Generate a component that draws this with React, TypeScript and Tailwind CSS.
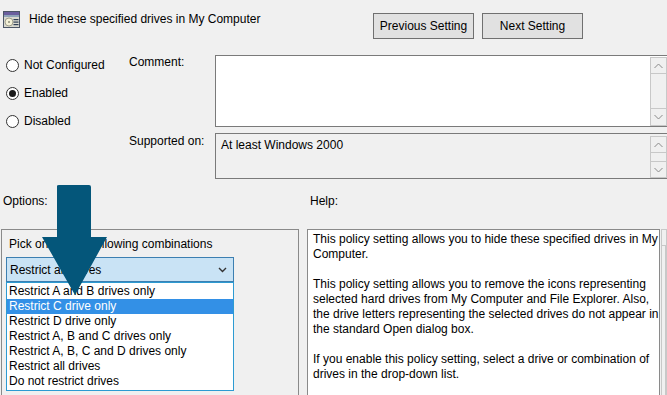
import { useState } from 'react'

const font = { fontFamily: '"Liberation Sans", Arial, sans-serif' }

const PolicyIcon = () => (
  <svg width="17" height="17" viewBox="0 0 17 17">
    <rect x="0.5" y="0.5" width="16" height="16" fill="#d9d9cf" stroke="#4b5566" />
    <rect x="1" y="1" width="15" height="3" fill="#6a5f9e" />
    <rect x="1" y="4" width="15" height="2" fill="#8fa4b8" />
    <circle cx="6" cy="11" r="4" fill="#f4f1d8" stroke="#8c8c7a" strokeWidth="0.8" />
    <circle cx="6" cy="11" r="1" fill="#8c8c7a" />
    <rect x="10.5" y="8" width="5" height="1.2" fill="#2f3f55" />
    <rect x="10.5" y="10.5" width="5" height="1.2" fill="#2f3f55" />
    <rect x="10.5" y="13" width="5" height="1.2" fill="#2f3f55" />
  </svg>
)

const Radio = ({ label, checked }: { label: string; checked?: boolean }) => (
  <div className="flex items-center h-[14px]">
    <span className="w-[13px] h-[13px] rounded-full border border-[#333] bg-white flex items-center justify-center">
      {checked && <span className="w-[7px] h-[7px] rounded-full bg-[#1a1a1a]" />}
    </span>
    <span className="ml-[5px] text-[12px] text-black">{label}</span>
  </div>
)

const Chevron = ({ up }: { up?: boolean }) => (
  <svg width="9" height="6" viewBox="0 0 9 6">
    <path d={up ? 'M0.5 5 L4.5 1 L8.5 5' : 'M0.5 1 L4.5 5 L8.5 1'} fill="none" stroke="#8a8a8a" strokeWidth="1" />
  </svg>
)

const ScrollBar = ({ track }: { track: number }) => (
  <div className="w-[17px] shrink-0 flex flex-col border border-[#c8c8c8] bg-[#f0f0f0]">
    <div className="h-[16px] flex items-center justify-center border-b border-[#c8c8c8]">
      <Chevron up />
    </div>
    <div style={{ height: track }} />
    <div className="h-[16px] flex items-center justify-center border-t border-[#c8c8c8]">
      <Chevron />
    </div>
  </div>
)

const options = [
  'Restrict A and B drives only',
  'Restrict C drive only',
  'Restrict D drive only',
  'Restrict A, B and C drives only',
  'Restrict A, B, C and D drives only',
  'Restrict all drives',
  'Do not restrict drives',
]

export default function App() {
  const [hover] = useState(1)
  return (
    <div className="w-[667px] h-[395px] overflow-hidden bg-[#f0f0f0] relative text-black" style={font}>
      {/* header */}
      <div className="h-[55px] flex items-start">
        <div className="flex items-center pt-[11px] pl-[3px]">
          <PolicyIcon />
          <span className="ml-[9px] text-[12px] leading-[15px]">Hide these specified drives in My Computer</span>
        </div>
        <div className="ml-auto mr-[84px] mt-[13px] flex gap-[8px]">
          <button className="w-[101px] h-[26px] border border-[#707070] bg-[#e1e1e1] text-[12px]">Previous Setting</button>
          <button className="w-[101px] h-[26px] border border-[#707070] bg-[#e1e1e1] text-[12px]">Next Setting</button>
        </div>
      </div>

      {/* state + comment */}
      <div className="flex h-[124px]">
        <div className="w-[129px] shrink-0 pl-[6px] pt-[3px] flex flex-col gap-[14px]">
          <Radio label="Not Configured" />
          <Radio label="Enabled" checked />
          <Radio label="Disabled" />
        </div>
        <div className="flex-1 flex flex-col">
          <div className="flex h-[72px]">
            <div className="w-[86px] shrink-0 text-[12px] leading-[14px]">Comment:</div>
            <div className="w-[460px] shrink-0 h-[72px] border border-[#7a7a7a] bg-white flex justify-end pr-[7px] pt-[1px]">
              <ScrollBar track={34} />
            </div>
          </div>
          <div className="flex h-[46px] mt-[6px]">
            <div className="w-[86px] shrink-0 text-[12px] pt-[1px] leading-[14px]">Supported on:</div>
            <div className="w-[460px] shrink-0 h-[46px] border border-[#7a7a7a] bg-[#f0f0f0] flex pr-[7px] pt-[2px]">
              <span className="flex-1 text-[12px] pl-[5px] pt-[2px] leading-[14px]">At least Windows 2000</span>
              <ScrollBar track={8} />
            </div>
          </div>
        </div>
      </div>

      {/* section labels */}
      <div className="flex h-[50px] pt-[15px] text-[12px] leading-[14px]">
        <div className="w-[310px] shrink-0 pl-[3px]">Options:</div>
        <div>Help:</div>
      </div>

      {/* panels */}
      <div className="flex h-[170px]">
        <div className="ml-[1px] w-[298px] shrink-0 border border-[#8a8a8a] border-b-0 bg-[#f0f0f0] pl-[4px]">
          <div className="text-[12px] pt-[7px] pl-[3px] leading-[14px]">Pick one of the following combinations</div>
          <div className="mt-[6px] w-[228px] h-[25px] border border-[#3c7fb1] bg-[#c9e3f5] flex items-center pl-[3px] pr-[6px]">
            <span className="flex-1 text-[12px]">Restrict all drives</span>
            <svg width="9" height="6" viewBox="0 0 9 6">
              <path d="M1 1 L4.5 4.5 L8 1" fill="none" stroke="#333" strokeWidth="1.4" />
            </svg>
          </div>
          <div className="w-[228px] border border-[#2d9bd2] bg-white py-[1px]">
            {options.map((o, i) => (
              <div
                key={o}
                className={`h-[15px] leading-[15px] text-[12px] pl-[2px] ${i === hover ? 'bg-[#3390e6] text-white' : ''}`}
              >
                {o}
              </div>
            ))}
          </div>
        </div>
        <div className="ml-[8px] w-[353px] shrink-0 border border-[#8a8a8a] border-b-0 bg-white pl-[5px] pt-[2px] text-[12px] leading-[15px]">
          <p>This policy setting allows you to hide these specified drives in My Computer.</p>
          <p className="mt-[15px]">
            This policy setting allows you to remove the icons representing selected hard drives from My Computer and File
            Explorer. Also, the drive letters representing the selected drives do not appear in the standard Open dialog box.
          </p>
          <p className="mt-[15px]">
            If you enable this policy setting, select a drive or combination of drives in the drop-down list.
          </p>
        </div>
        <div className="ml-[1px] flex-1 border border-[#c8c8c8] border-b-0 bg-[#f0f0f0] flex flex-col">
          <div className="h-[16px] border-b border-[#c8c8c8]" />
          <div className="flex-1 ml-[3px] border-l border-[#c8c8c8] bg-[#dadada]" />
        </div>
      </div>

      {/* annotation arrow */}
      <svg className="absolute left-[40px] top-[184px]" width="70" height="114" viewBox="0 0 70 114">
        <path d="M17 2 Q17 1 19 1 L49 1 Q51 1 51 3 L51 53 L67 53 L35 111 L2 53 L17 53 Z" fill="#04567a" />
      </svg>
    </div>
  )
}
